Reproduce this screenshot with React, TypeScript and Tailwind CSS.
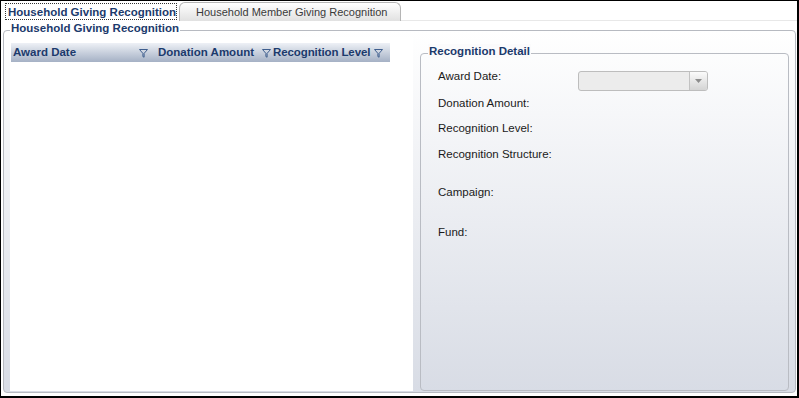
function FilterIcon() {
  return (
    <svg width="9" height="10" viewBox="0 0 9 10" className="shrink-0">
      <path d="M0.5 1.5 H8.5 L5.1 5.4 V9.2 L3.9 8.6 V5.4 Z" fill="none" stroke="#3f5e8e" strokeWidth="1" strokeLinejoin="round" />
    </svg>
  )
}

export default function App() {
  const labels = [
    { text: 'Award Date:', h: 'h-[27px]' },
    { text: 'Donation Amount:', h: 'h-[25px]' },
    { text: 'Recognition Level:', h: 'h-[26px]' },
    { text: 'Recognition Structure:', h: 'h-[38px]' },
    { text: 'Campaign:', h: 'h-[40px]' },
    { text: 'Fund:', h: 'h-[20px]' },
  ]

  return (
    <div className="w-[799px] h-[398px] bg-white border-l border-t border-r-2 border-b-2 border-black flex flex-col overflow-hidden font-['Liberation_Sans',Arial,sans-serif] text-[11.5px]">
      {/* tab strip */}
      <div className="flex h-[20px] shrink-0">
        <div className="ml-[4px] mt-[2px] h-[17px] w-[172px] border border-dotted border-[#333] flex items-center pl-[2px] font-bold text-[#1c3a6c] leading-[14px] whitespace-nowrap">
          Household Giving Recognition
        </div>
        <div className="ml-[2px] mt-[1px] h-[19px] w-[222px] rounded-t-[6px] border border-b-0 border-[#b5b5b5] bg-linear-to-b from-white to-[#e1e1e1] flex items-center pl-[16px] text-[11px] text-[#3a3a3a] whitespace-nowrap">
          Household Member Giving Recognition
        </div>
        <div className="flex-1 border-b border-[#e8e8e8]" />
      </div>

      <div className="flex-1 flex flex-col pt-[9px] pl-[2px] pr-[1px] pb-[3px]">
        <div className="relative flex-1 flex border border-[#b7bac1] rounded-[4px] bg-linear-to-b from-white to-[#d8dce5]">
          <span className="absolute left-[6px] top-[-10px] px-[1px] bg-white font-bold text-[#1c3a6c] leading-[14px] whitespace-nowrap">
            Household Giving Recognition
          </span>

          {/* grid */}
          <div className="ml-[6px] mt-[6px] mb-[1px] w-[403px] bg-white pt-[6px] pl-[1px]">
            <div className="w-[379px] h-[19px] flex items-center bg-linear-to-b from-[#eef1f6] to-[#a5b1c5] font-bold text-[#1c3a6c] whitespace-nowrap">
              <div className="w-[141px] flex items-center justify-between pl-[2px] pr-[4px]">
                <span>Award Date</span>
                <FilterIcon />
              </div>
              <div className="w-[120px] flex items-center justify-between pl-[6px] pr-[1px]">
                <span>Donation Amount</span>
                <FilterIcon />
              </div>
              <div className="flex-1 flex items-center justify-between pl-[1px] pr-[7px]">
                <span className="tracking-[-0.1px]">Recognition Level</span>
                <FilterIcon />
              </div>
            </div>
          </div>

          {/* detail */}
          <div className="flex-1 pl-[7px] pr-[6px] pt-[22px] pb-[1px]">
            <div className="relative h-full border border-[#b9bcc3] rounded-[4px] pl-[17px] pt-[15px]">
              <span className="absolute left-[7px] top-[-10px] px-[1px] bg-[#fbfbfc] font-bold text-[#1c3a6c] leading-[14px] whitespace-nowrap">
                Recognition Detail
              </span>
              {labels.map((l, i) => (
                <div key={l.text} className={`flex ${l.h}`}>
                  <span className="w-[140px] leading-[14px] text-[#1a1a1a] whitespace-nowrap">{l.text}</span>
                  {i === 0 && (
                    <div className="mt-[2px] w-[130px] h-[20px] border border-[#bdbdbd] rounded-[3px] bg-[#ececec] flex justify-end">
                      <div className="w-[18px] h-full border-l border-[#c2c2c2] rounded-r-[2px] bg-linear-to-b from-[#fbfbfb] to-[#d4d4d4] flex items-center justify-center">
                        <svg width="7" height="4" viewBox="0 0 7 4">
                          <path d="M0 0 H7 L3.5 4 Z" fill="#8c8c8c" />
                        </svg>
                      </div>
                    </div>
                  )}
                </div>
              ))}
            </div>
          </div>
        </div>
      </div>
    </div>
  )
}
